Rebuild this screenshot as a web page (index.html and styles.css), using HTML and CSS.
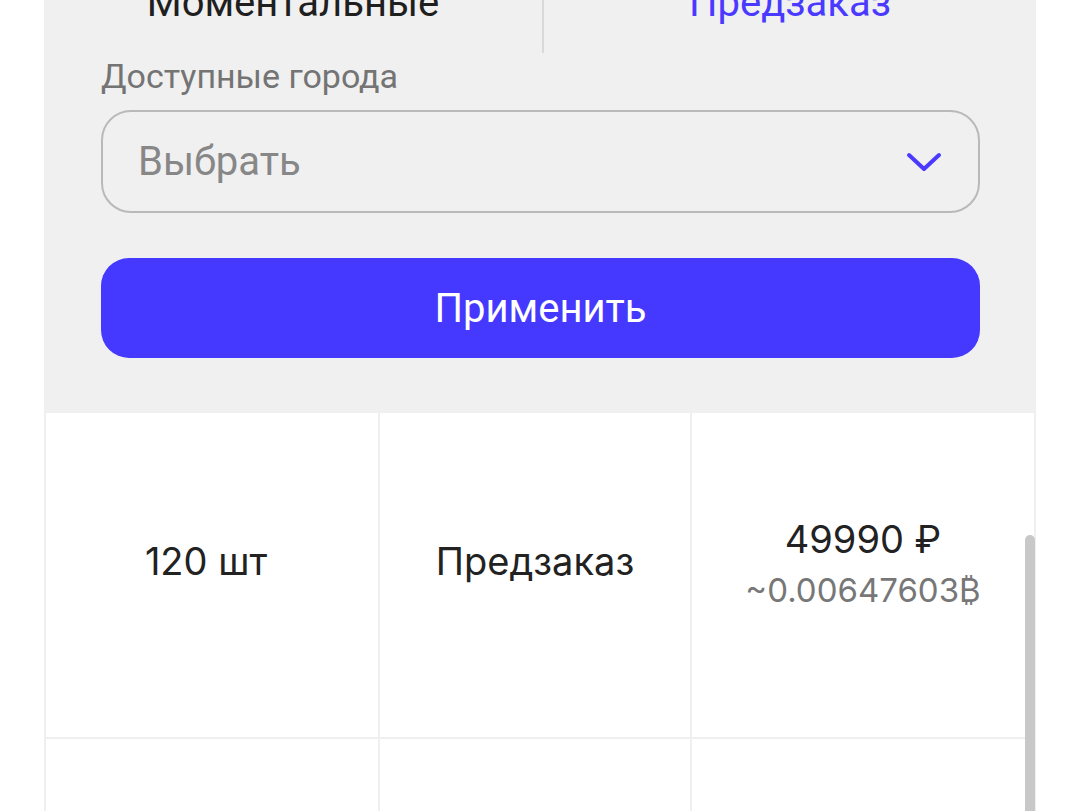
FILE: index.html
```html
<!DOCTYPE html>
<html lang="ru">
<head>
    <meta charset="UTF-8">
    <meta name="viewport" content="width=device-width, initial-scale=1.0">
    <title>Товары</title>
    <link rel="stylesheet" href="styles.css">
</head>
<body>
    <div class="sheet">
        <div class="filters">
            <div class="tabs">
                <button class="tab">Моментальные</button>
                <button class="tab active">Предзаказ</button>
            </div>

            <label class="label" for="city">Доступные города</label>
            <div class="select" id="city">
                <span class="placeholder">Выбрать</span>
                <svg class="chevron" width="36" height="22" viewBox="0 0 36 22">
                    <path d="M3 4 L18 18 L33 4" fill="none" stroke="#4a3aff" stroke-width="4" stroke-linecap="round" stroke-linejoin="round"/>
                </svg>
            </div>

            <button class="apply">Применить</button>
        </div>

        <div class="table">
            <div class="row">
                <div class="cell qty">120 шт</div>
                <div class="cell">Предзаказ</div>
                <div class="cell price">
                    <span class="rub">49990 ₽</span>
                    <span class="btc">~0.00647603₿</span>
                </div>
            </div>
            <div class="row">
                <div class="cell"></div>
                <div class="cell"></div>
                <div class="cell"></div>
            </div>
        </div>

        <div class="scrollbar"></div>
    </div>
</body>
</html>
```

FILE: styles.css
```css
body {
    margin: 0;
    background: #ffffff;
    font-family: Roboto, "Noto Sans", sans-serif;
    overflow: hidden;
}

.sheet {
    position: relative;
    width: 992px;
    margin-left: 44px;
    margin-top: -20px;
}

.filters {
    background: #f0f0f0;
    padding: 0 56px 55px 57px;
}

.tabs {
    display: grid;
    grid-template-columns: 500px 1fr;
    margin: 0 -56px 0 -57px;
    height: 73px;
}

.tab {
    border: none;
    background: none;
    font-family: Roboto, sans-serif;
    font-size: 40px;
    color: #1f1f1f;
    padding: 0 0 27px;
    line-height: 46px;
    cursor: pointer;
}

.tab:first-child {
    border-right: 2px solid #d9d9d9;
}

.tab.active {
    color: #4a3aff;
}

.label {
    display: block;
    font-size: 34px;
    color: #747474;
    line-height: 40px;
    margin-top: 3px;
    margin-bottom: 14px;
}

.select {
    display: flex;
    align-items: center;
    justify-content: space-between;
    box-sizing: border-box;
    height: 103px;
    border: 2px solid #b9b9b9;
    border-radius: 30px;
    padding: 0 36px 0 35px;
}

.placeholder {
    font-size: 40px;
    color: #878787;
}

.apply {
    display: block;
    width: 100%;
    height: 100px;
    margin-top: 45px;
    border: none;
    border-radius: 28px;
    background: #4639ff;
    color: #ffffff;
    font-family: Roboto, sans-serif;
    font-size: 40px;
    cursor: pointer;
}

.table {
    font-family: Inter, sans-serif;
    color: #222222;
}

.row {
    display: grid;
    grid-template-columns: 334px 312px 1fr;
    height: 324px;
    border-bottom: 2px solid #efefef;
}

.cell {
    display: flex;
    flex-direction: column;
    align-items: center;
    justify-content: center;
    font-size: 38px;
    padding-bottom: 28px;
    border-left: 2px solid #efefef;
}

.cell:last-child {
    border-right: 2px solid #efefef;
}

.qty {
    padding-right: 12px;
}

.price {
    gap: 8px;
    padding-bottom: 24px;
}

.btc {
    font-size: 33px;
    color: #777777;
}

.scrollbar {
    position: absolute;
    right: 1px;
    top: 555px;
    width: 10px;
    height: 400px;
    background: #c8c8c8;
    border-radius: 5px 5px 0 0;
}
```
